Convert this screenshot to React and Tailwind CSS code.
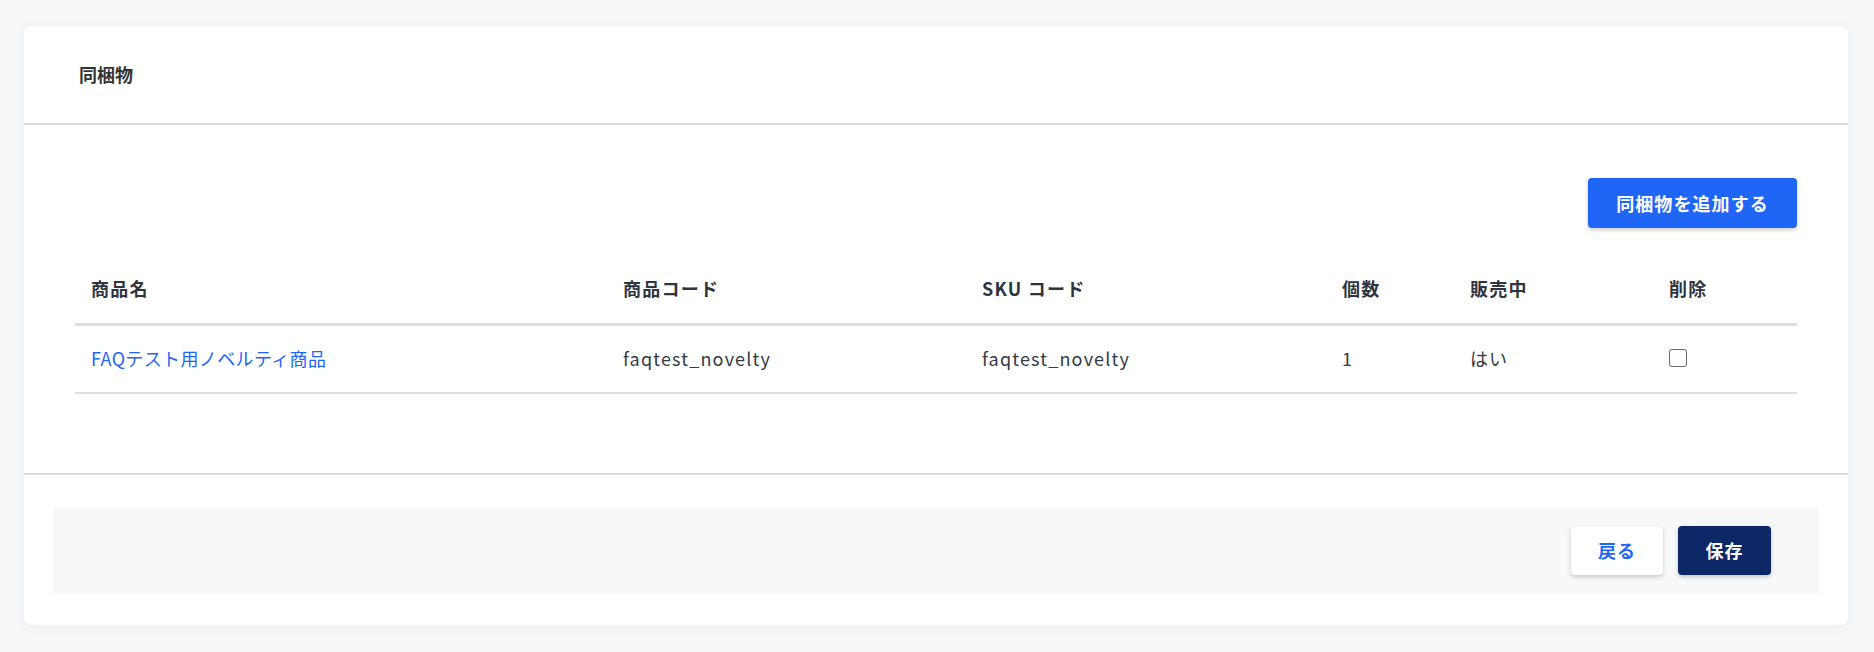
export default function App() {
  const rows = [
    {
      name: "FAQテスト用ノベルティ商品",
      code: "faqtest_novelty",
      sku: "faqtest_novelty",
      qty: 1,
      onSale: "はい",
    },
  ];

  return (
    <div
      className="min-h-screen bg-[#f5f7f9] pl-[24px] pr-[26px] pt-[26px] pb-[27px] text-[#343a46]"
      style={{ fontFamily: '"Noto Sans CJK JP", "Noto Sans", sans-serif' }}
    >
      {/* Card */}
      <div className="rounded-[8px] bg-white shadow-[0_2px_12px_rgba(0,0,0,0.05)]">
        {/* Header */}
        <div className="flex h-[99px] items-center border-b-2 border-[#dddddd] px-[55px]">
          <h2 className="text-[18px] font-bold text-[#333]">同梱物</h2>
        </div>

        {/* Body */}
        <div className="border-b-2 border-[#dddddd] px-[51px] pt-[53px] pb-[79px]">
          <div className="flex justify-end">
            <button className="h-[50px] w-[209px] rounded-[4px] bg-[#1f66f6] text-[18px] font-bold tracking-[0.06em] text-white shadow-[0_2px_4px_rgba(0,0,0,0.2)]">
              同梱物を追加する
            </button>
          </div>

          <table className="mt-[27px] w-full table-fixed border-collapse text-left text-[18px]">
            <colgroup>
              <col className="w-[532px]" />
              <col className="w-[359px]" />
              <col className="w-[360px]" />
              <col className="w-[128px]" />
              <col className="w-[199px]" />
              <col />
            </colgroup>
            <thead>
              <tr className="h-[69px] border-b-[3px] border-[#dddddd] tracking-[0.07em] text-[#2f3540]">
                <th className="px-[16px] font-bold">商品名</th>
                <th className="px-[16px] font-bold">商品コード</th>
                <th className="px-[16px] font-bold">SKU コード</th>
                <th className="px-[16px] font-bold">個数</th>
                <th className="px-[16px] font-bold">販売中</th>
                <th className="px-[16px] font-bold">削除</th>
              </tr>
            </thead>
            <tbody>
              {rows.map((r) => (
                <tr key={r.code} className="h-[69px] border-b-2 border-[#dddddd]">
                  <td className="px-[16px] tracking-[0.02em]">
                    <a href="#" className="text-[#1f66f6]">
                      {r.name}
                    </a>
                  </td>
                  <td className="px-[16px] tracking-[0.065em]">{r.code}</td>
                  <td className="px-[16px] tracking-[0.065em]">{r.sku}</td>
                  <td className="px-[16px]">{r.qty}</td>
                  <td className="px-[16px] tracking-[0.05em]">{r.onSale}</td>
                  <td className="px-[16px]">
                    <span className="-mt-[2px] block h-[18px] w-[18px] rounded-[3px] border-[1.5px] border-[#6b6b6b] bg-white"></span>
                  </td>
                </tr>
              ))}
            </tbody>
          </table>
        </div>

        {/* Footer */}
        <div className="px-[29px] py-[32px]">
          <div className="flex h-[86px] items-center justify-end gap-[15px] bg-[#f6f8fa] pr-[48px]">
            <button className="h-[49px] w-[92px] rounded-[4px] bg-white text-[18px] font-bold tracking-[0.06em] text-[#1f66f6] shadow-[0_2px_4px_rgba(0,0,0,0.2)]">
              戻る
            </button>
            <button className="h-[49px] w-[93px] rounded-[4px] bg-[#0c2867] text-[18px] font-bold tracking-[0.06em] text-white shadow-[0_2px_4px_rgba(0,0,0,0.2)]">
              保存
            </button>
          </div>
        </div>
      </div>
    </div>
  );
}
